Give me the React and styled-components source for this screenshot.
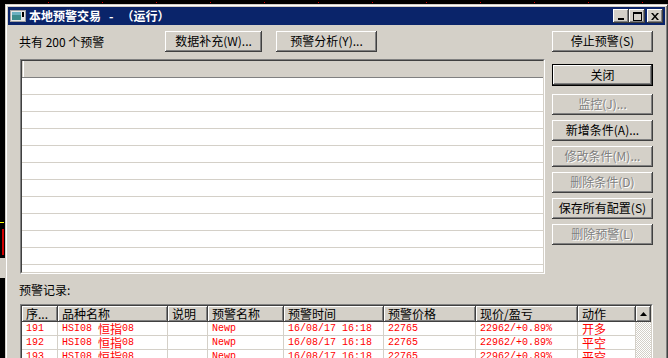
import React from 'react';
import styled, { createGlobalStyle } from 'styled-components';

const GlobalStyle = createGlobalStyle`
  html, body { margin: 0; padding: 0; }
  body {
    width: 668px;
    height: 358px;
    overflow: hidden;
    background-color: #000;
    background-image:
      linear-gradient(#ffff00, #ffff00),
      linear-gradient(#d00000, #d00000),
      linear-gradient(#d4d0c8, #d4d0c8),
      linear-gradient(to right, #e00000 1px, transparent 1px);
    background-size: 4px 1px, 2px 26px, 5px 20px, 54px 1px;
    background-position: 0 222px, 2px 229px, 0 258px, 48px 2px;
    background-repeat: no-repeat, no-repeat, no-repeat, repeat-x;
    font-family: "Noto Sans CJK SC", "Liberation Sans", sans-serif;
    font-size: 12px;
  }
`;

const raised = `
  box-shadow: inset -1px -1px #404040, inset 1px 1px #fff,
    inset -2px -2px #808080, inset 2px 2px #d4d0c8;
`;

const Window = styled.div`
  box-sizing: border-box;
  margin: 4px 0 0 5px;
  width: 663px;
  height: 362px;
  padding: 2px;
  background: #d4d0c8;
  border: 1px solid;
  border-color: #d4d0c8 #404040 #404040 #d4d0c8;
  box-shadow: inset 1px 1px #fff, inset -1px -1px #808080;
`;

const TitleBar = styled.div`
  display: flex;
  align-items: center;
  height: 18px;
  padding: 0 2px;
  background: #0a246a;
  color: #fff;
`;

const Caption = styled.div`
  flex: 1;
  margin-left: 3px;
  font-weight: bold;
  font-size: 12px;
  line-height: 18px;
  white-space: nowrap;
`;

const Dash = styled.span`
  margin: 0 8px;
`;

const CapButtons = styled.div`
  display: flex;
`;

const CapButton = styled.div`
  width: 16px;
  height: 14px;
  margin-left: ${p => (p.$gap ? 2 : 0)}px;
  background: #d4d0c8;
  display: flex;
  align-items: center;
  justify-content: center;
  ${raised}
`;

const Client = styled.div`
  padding: 6px 0 0 12px;
`;

const Row = styled.div`
  display: grid;
  grid-template-columns: 525px 101px;
  column-gap: 7px;
  margin-top: ${p => p.$top || 0}px;
`;

const Toolbar = styled.div`
  display: flex;
  align-items: center;
`;

const Count = styled.div`
  width: 146px;
  margin-left: -1px;
  line-height: 21px;
`;

const Button = styled.button`
  box-sizing: border-box;
  width: ${p => p.$w || 101}px;
  height: ${p => (p.$default ? 22 : 21)}px;
  margin: 0 ${p => p.$mr || 0}px ${p => (p.$default ? 3 : 0)}px 0;
  padding: 0 0 1px;
  display: flex;
  align-items: center;
  justify-content: center;
  font-family: "Noto Sans CJK SC", "Liberation Sans", sans-serif;
  font-size: 12px;
  line-height: 16px;
  white-space: nowrap;
  color: ${p => (p.disabled ? '#808080' : '#000')};
  text-shadow: ${p => (p.disabled ? '1px 1px 0 #fff' : 'none')};
  background: #d4d0c8;
  border: ${p => (p.$default ? '1px solid #000' : 'none')};
  ${raised}
`;

const SideButtons = styled.div`
  display: flex;
  flex-direction: column;
  gap: 5px;
  padding-top: 5px;
`;

const Sunken = styled.div`
  box-sizing: border-box;
  width: ${p => p.$w}px;
  height: ${p => p.$h}px;
  margin-top: ${p => p.$top || 0}px;
  border: 1px solid;
  border-color: #808080 #fff #fff #808080;
`;

const SunkenInner = styled.div`
  box-sizing: border-box;
  height: 100%;
  border: 1px solid;
  border-color: #404040 #d4d0c8 #d4d0c8 #404040;
  background: #fff;
  overflow: hidden;
  display: ${p => (p.$flex ? 'flex' : 'block')};
`;

const ListHeader = styled.div`
  height: 16px;
  background: #d4d0c8;
  border-bottom: 1px solid #808080;
  box-shadow: inset 1px 0 #d4d0c8, inset 2px 0 #fff;
`;

const ListRow = styled.div`
  height: 16px;
  border-bottom: 1px solid #d4d0c8;
`;

const SectionLabel = styled.div`
  margin: 9px 0 0 -1px;
  line-height: 14px;
`;

const TableBody = styled.div`
  flex: 1;
`;

const cols = '36px 110px 40px 76px 100px 92px 102px 58px';

const HeadRow = styled.div`
  display: grid;
  grid-template-columns: ${cols};
  height: 16px;
`;

const HeadCell = styled.div`
  padding-left: 4px;
  line-height: 16px;
  white-space: nowrap;
  overflow: hidden;
  background: #d4d0c8;
  ${raised}
`;

const DataRow = styled.div`
  display: grid;
  grid-template-columns: ${cols};
  height: 13px;
  border-bottom: 1px solid #d4d0c8;
  &:first-of-type { border-top: 1px solid #fff; }
`;

const Cell = styled.div`
  display: flex;
  align-items: center;
  height: 13px;
  padding-left: 4px;
  border-right: 1px solid #d4d0c8;
  font-family: "Liberation Mono", "Noto Sans CJK SC", monospace;
  font-size: 10px;
  line-height: 13px;
  color: #ff0000;
  white-space: pre;
  overflow: hidden;
`;

const Han = styled.span`
  font-family: "Noto Sans CJK SC", sans-serif;
  font-size: 12px;
  line-height: 13px;
`;

const ScrollBar = styled.div`
  width: 15px;
  display: flex;
  flex-direction: column;
`;

const ScrollArrow = styled.div`
  height: 16px;
  background: #d4d0c8;
  display: flex;
  align-items: center;
  justify-content: center;
  ${raised}
`;

const ScrollTrack = styled.div`
  flex: 1;
  background: repeating-conic-gradient(#fff 0 25%, #d4d0c8 0 50%) 0 0 / 2px 2px;
`;

const AppIcon = () => (
  <svg width="16" height="12" viewBox="0 0 16 12">
    <rect x="0.5" y="0.5" width="15" height="11" fill="#e8e8e8" stroke="#a0a0a0" />
    <rect x="2" y="2" width="9" height="8" fill="#3c8c8c" />
    <rect x="2" y="2" width="9" height="3" fill="#6cb0c0" />
    <rect x="12" y="2" width="2" height="5" fill="#000" />
  </svg>
);

const MinIcon = () => (
  <svg width="8" height="7" viewBox="0 0 8 7">
    <rect x="1" y="5" width="6" height="2" fill="#000" />
  </svg>
);

const MaxIcon = () => (
  <svg width="9" height="9" viewBox="0 0 9 9">
    <rect x="0.5" y="0.5" width="8" height="8" fill="none" stroke="#000" />
    <rect x="0" y="0" width="9" height="2" fill="#000" />
  </svg>
);

const CloseIcon = () => (
  <svg width="8" height="7" viewBox="0 0 8 7">
    <path d="M0 0h2l2 2.5L6 0h2L5 3.5 8 7H6L4 4.5 2 7H0l3-3.5z" fill="#000" />
  </svg>
);

const UpIcon = () => (
  <svg width="7" height="4" viewBox="0 0 7 4">
    <path d="M3.5 0L7 4H0z" fill="#000" />
  </svg>
);

const records = [
  { id: 191, action: '开多' },
  { id: 192, action: '平空' },
  { id: 193, action: '平空' },
];

const heads = ['序...', '品种名称', '说明', '预警名称', '预警时间', '预警价格', '现价/盈亏', '动作'];

export default function App() {
  return (
    <>
      <GlobalStyle />
      <Window>
        <TitleBar>
          <AppIcon />
          <Caption>
            本地预警交易<Dash>-</Dash>（运行）
          </Caption>
          <CapButtons>
            <CapButton><MinIcon /></CapButton>
            <CapButton><MaxIcon /></CapButton>
            <CapButton $gap><CloseIcon /></CapButton>
          </CapButtons>
        </TitleBar>
        <Client>
          <Row>
            <Toolbar>
              <Count>共有 200 个预警</Count>
              <Button $w={97} $mr={14}>数据补充(W)...</Button>
              <Button $w={101}>预警分析(Y)...</Button>
            </Toolbar>
            <Button>停止预警(S)</Button>
          </Row>
          <Row $top={7}>
            <Sunken $w={525} $h={215}>
              <SunkenInner>
                <ListHeader />
                {Array.from({ length: 12 }).map((_, i) => (
                  <ListRow key={i} />
                ))}
              </SunkenInner>
            </Sunken>
            <SideButtons>
              <Button $default>关闭</Button>
              <Button disabled>监控(J)...</Button>
              <Button>新增条件(A)...</Button>
              <Button disabled>修改条件(M)...</Button>
              <Button disabled>删除条件(D)</Button>
              <Button>保存所有配置(S)</Button>
              <Button disabled>删除预警(L)</Button>
            </SideButtons>
          </Row>
          <SectionLabel>预警记录:</SectionLabel>
          <Sunken $w={633} $h={60} $top={7}>
            <SunkenInner $flex>
              <TableBody>
                <HeadRow>
                  {heads.map(h => (
                    <HeadCell key={h}>{h}</HeadCell>
                  ))}
                </HeadRow>
                {records.map(r => (
                  <DataRow key={r.id}>
                    <Cell>{r.id}</Cell>
                    <Cell>HSI08 <Han>恒指</Han>08</Cell>
                    <Cell />
                    <Cell>Newp</Cell>
                    <Cell>16/08/17 16:18</Cell>
                    <Cell>22765</Cell>
                    <Cell>22962/+0.89%</Cell>
                    <Cell><Han>{r.action}</Han></Cell>
                  </DataRow>
                ))}
              </TableBody>
              <ScrollBar>
                <ScrollArrow><UpIcon /></ScrollArrow>
                <ScrollTrack />
              </ScrollBar>
            </SunkenInner>
          </Sunken>
        </Client>
      </Window>
    </>
  );
}
